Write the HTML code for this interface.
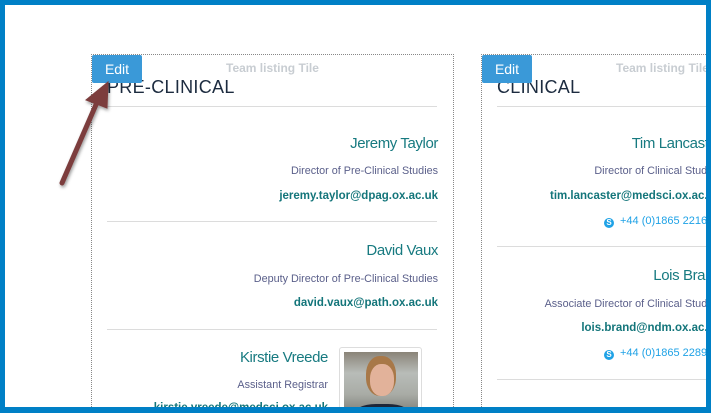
<!DOCTYPE html>
<html style="width:711px;height:413px;overflow:hidden"><head><meta charset="utf-8"><style>
*{margin:0;padding:0;box-sizing:border-box}
body{width:711px;height:413px;overflow:hidden;background:#fff;position:relative;font-family:"Liberation Sans",sans-serif}
.frame{position:absolute;left:0;top:0;width:711px;height:413px;border-style:solid;border-color:#0080c6;border-width:5px 5px 6px 5px;z-index:10;pointer-events:none}
.tile{position:absolute;top:54px;width:363px;height:359px;border:1px dotted #888;border-bottom:none;overflow:hidden}
.edit{position:absolute;left:0;top:0;width:50px;height:28px;background:#3a99d8;color:#fff;font-size:14px;line-height:28px;text-align:center;border-radius:2px}
.tl{position:absolute;top:6px;left:134px;font-size:12px;font-weight:bold;color:#c8cdd2}
.h{position:absolute;left:15px;top:22px;font-size:18px;letter-spacing:0.3px;color:#1c2b3f;font-family:"Liberation Sans",sans-serif}
.hr{position:absolute;left:15px;width:330px;height:1px;background:#dcdcdc}
.t{position:absolute;right:15px;white-space:nowrap;text-align:right}
.n{font-size:15px;color:#177a80;letter-spacing:-0.4px}
.r{font-size:10.8px;color:#5a5f8a}
.e{font-size:11.5px;font-weight:bold;color:#13757a}
.p{font-size:11px;color:#1fa2e6}
.sk{display:inline-block;width:10px;height:10px;border-radius:50%;background:#1fa2e6;color:#fff;font-size:8px;line-height:10px;text-align:center;font-weight:bold;margin-right:6px;vertical-align:-1px}
</style></head><body>
<div class="tile" style="left:91px">
 <div class="h">PRE-CLINICAL</div>
 <div class="edit">Edit</div>
 <div class="tl">Team listing Tile</div>
 <div class="hr" style="top:51px"></div>
 <div class="t n" style="top:80px">Jeremy Taylor</div>
 <div class="t r" style="top:110px">Director of Pre-Clinical Studies</div>
 <div class="t e" style="top:135px">jeremy.taylor@dpag.ox.ac.uk</div>
 <div class="hr" style="top:166px"></div>
 <div class="t n" style="top:187px">David Vaux</div>
 <div class="t r" style="top:218px">Deputy Director of Pre-Clinical Studies</div>
 <div class="t e" style="top:242px">david.vaux@path.ox.ac.uk</div>
 <div class="hr" style="top:274px"></div>
 <div class="t n" style="top:294px;right:125px">Kirstie Vreede</div>
 <div class="t r" style="top:324px;right:125px">Assistant Registrar</div>
 <div class="t e" style="top:347px;right:125px">kirstie.vreede@medsci.ox.ac.uk</div>
 <div style="position:absolute;left:247px;top:292px;width:83px;height:80px;border:1px solid #ddd;border-radius:3px;background:#fff;padding:4px">
  <div style="width:74px;height:70px;background:linear-gradient(180deg,#8a8478 0%,#b8bcb8 30%,#a9aca6 60%,#6a6a64 100%);position:relative;overflow:hidden">
   <div style="position:absolute;left:22px;top:4px;width:30px;height:40px;border-radius:45%;background:#a87848"></div>
   <div style="position:absolute;left:26px;top:12px;width:24px;height:32px;border-radius:45%;background:#e2b29a"></div>
   <div style="position:absolute;left:8px;top:52px;width:60px;height:30px;border-radius:40%;background:#1e2638"></div>
  </div>
 </div>
</div>
<div class="tile" style="left:481px">
 <div class="h">CLINICAL</div>
 <div class="edit">Edit</div>
 <div class="tl">Team listing Tile</div>
 <div class="hr" style="top:51px"></div>
 <div class="t n" style="top:80px;right:122px">Tim Lancaster</div>
 <div class="t r" style="top:110px;right:122px">Director of Clinical Studies</div>
 <div class="t e" style="top:135px;right:122px">tim.lancaster@medsci.ox.ac.uk</div>
 <div class="t p" style="top:160px;left:122px;text-align:left"><span class="sk">S</span>+44 (0)1865 221686</div>
 <div class="hr" style="top:191px;width:420px"></div>
 <div class="t n" style="top:212px;right:122px">Lois Brand</div>
 <div class="t r" style="top:243px;right:122px">Associate Director of Clinical Studies</div>
 <div class="t e" style="top:267px;right:122px">lois.brand@ndm.ox.ac.uk</div>
 <div class="t p" style="top:292px;left:122px;text-align:left"><span class="sk">S</span>+44 (0)1865 228900</div>
 <div class="hr" style="top:324px;width:420px"></div>
</div>
<svg style="position:absolute;left:0;top:0;z-index:5" width="711" height="413">
 <defs><filter id="s" x="-50%" y="-50%" width="200%" height="200%"><feDropShadow dx="1" dy="2" stdDeviation="1.5" flood-color="#000" flood-opacity="0.4"/></filter></defs>
 <g filter="url(#s)" fill="#7b3d3e" stroke="#7b3d3e">
  <line x1="62" y1="183" x2="98" y2="100" stroke-width="5" stroke-linecap="round"/>
  <polygon points="108,82 86,100 107,108" stroke-width="1"/>
 </g>
</svg>
<div class="frame"></div>
</body></html>
